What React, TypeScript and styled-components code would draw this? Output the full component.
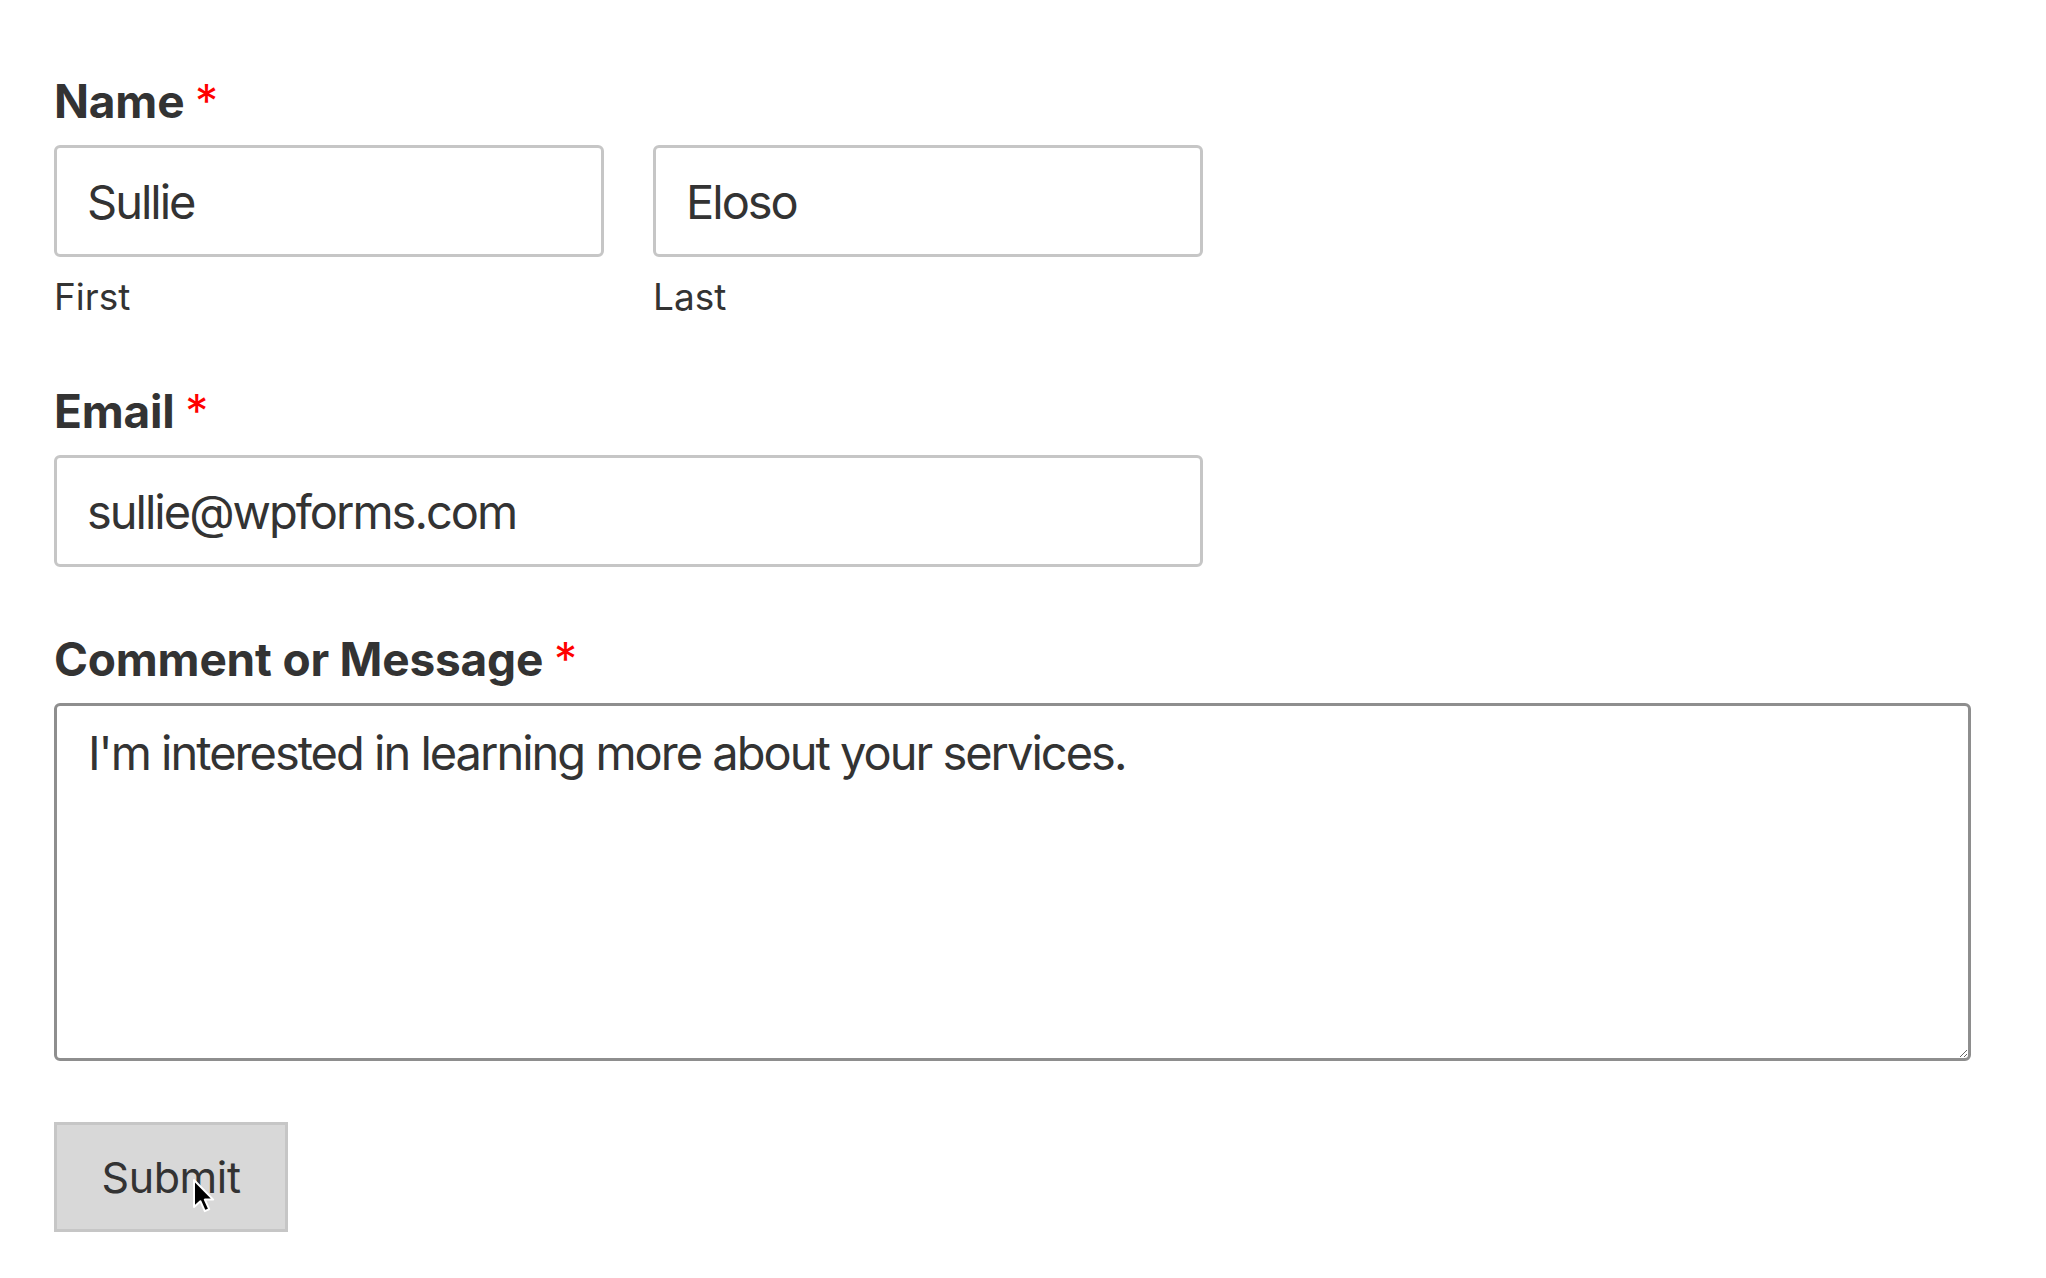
import React, { useState } from "react";
import styled, { createGlobalStyle } from "styled-components";

const GlobalStyle = createGlobalStyle`
  html, body {
    margin: 0;
    padding: 0;
    background: #ffffff;
  }
  body {
    font-family: Inter, "Noto Sans", "Liberation Sans", sans-serif;
    color: #333333;
  }
  * {
    box-sizing: border-box;
  }
`;

function ContactForm() {
  const [first, setFirst] = useState("Sullie");
  const [last, setLast] = useState("Eloso");
  const [email, setEmail] = useState("sullie@wpforms.com");
  const [message, setMessage] = useState(
    "I'm interested in learning more about your services."
  );

  return (
    <Page>
      <Form onSubmit={(e) => e.preventDefault()}>
        <Field>
          <Label>
            Name <Required>*</Required>
          </Label>
          <NameRow>
            <SubField>
              <Input
                type="text"
                value={first}
                onChange={(e) => setFirst(e.target.value)}
              />
              <SubLabel>First</SubLabel>
            </SubField>
            <SubField>
              <Input
                type="text"
                value={last}
                onChange={(e) => setLast(e.target.value)}
              />
              <SubLabel>Last</SubLabel>
            </SubField>
          </NameRow>
        </Field>

        <Field>
          <Label>
            Email <Required>*</Required>
          </Label>
          <Input
            type="email"
            value={email}
            onChange={(e) => setEmail(e.target.value)}
            $width="1149px"
          />
        </Field>

        <Field>
          <Label>
            Comment or Message <Required>*</Required>
          </Label>
          <Textarea
            value={message}
            onChange={(e) => setMessage(e.target.value)}
          />
        </Field>

        <SubmitWrap>
          <SubmitButton type="submit">Submit</SubmitButton>
          <Cursor width="24" height="36" viewBox="0 0 12 18">
            <path
              d="M1 1 L1 14.5 L4.2 11.6 L6.4 16.6 L8.6 15.6 L6.4 10.8 L10.6 10.8 Z"
              fill="#000"
              stroke="#fff"
              strokeWidth="1"
              strokeLinejoin="round"
            />
          </Cursor>
        </SubmitWrap>
      </Form>
    </Page>
  );
}

const Page = styled.div`
  padding: 73px 0 40px 54px;
`;

const Form = styled.form`
  display: flex;
  flex-direction: column;
  align-items: flex-start;
`;

const Field = styled.div`
  display: flex;
  flex-direction: column;
  margin-bottom: 64px;
`;

const Label = styled.label`
  display: block;
  font-size: 46px;
  line-height: 56px;
  font-weight: 700;
  letter-spacing: -0.2px;
  color: #333333;
  margin-bottom: 16px;
`;

const Required = styled.span`
  color: #ff0000;
  font-weight: 400;
`;

const NameRow = styled.div`
  display: flex;
  gap: 49px;
`;

const SubField = styled.div`
  display: flex;
  flex-direction: column;
`;

const Input = styled.input<{ $width?: string }>`
  width: ${({ $width }) => $width || "550px"};
  height: 112px;
  padding: 0 30px;
  border: 3px solid #c6c6c6;
  border-radius: 6px;
  outline: none;
  background: #ffffff;
  font-family: Inter, "Noto Sans", "Liberation Sans", sans-serif;
  font-size: 47px;
  letter-spacing: -2px;
  color: #333333;
`;

const SubLabel = styled.div`
  margin-top: 17px;
  font-size: 37px;
  line-height: 45px;
  color: #333333;
`;

const Textarea = styled.textarea`
  width: 1917px;
  height: 358px;
  padding: 19px 31px;
  border: 3px solid #8e8e8e;
  border-radius: 6px;
  outline: none;
  resize: vertical;
  background: #ffffff;
  font-family: Inter, "Noto Sans", "Liberation Sans", sans-serif;
  font-size: 47px;
  line-height: 56px;
  letter-spacing: -2px;
  color: #333333;
`;

const SubmitWrap = styled.div`
  position: relative;
  margin-top: -3px;
`;

const SubmitButton = styled.button`
  width: 234px;
  height: 110px;
  padding: 0;
  border: 3px solid #c6c6c6;
  border-radius: 0;
  background: #d8d8d8;
  font-family: Inter, "Noto Sans", "Liberation Sans", sans-serif;
  font-size: 43px;
  letter-spacing: -0.4px;
  color: #333333;
  cursor: pointer;
`;

const Cursor = styled.svg`
  position: absolute;
  left: 138px;
  top: 56px;
  pointer-events: none;
`;

export default function App() {
  return (
    <>
      <GlobalStyle />
      <ContactForm />
    </>
  );
}
